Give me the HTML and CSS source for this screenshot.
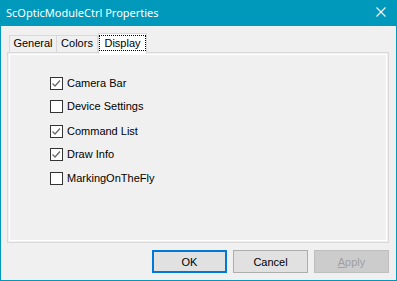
FILE: index.html
```html
<!DOCTYPE html>
<html>
<head>
<meta charset="utf-8">
<link rel="stylesheet" href="styles.css">
</head>
<body>
<div class="window">
  <div class="titlebar">
    <span class="title">ScOpticModuleCtrl Properties</span>
    <svg class="close" width="10" height="10" viewBox="0 0 10 10"><path d="M0.5 0.5 L9.5 9.5 M9.5 0.5 L0.5 9.5" stroke="#fff" stroke-width="1.1" fill="none"/></svg>
  </div>
  <div class="content">
    <div class="tabs">
      <div class="tab tab-general">General</div>
      <div class="tab tab-colors">Colors</div>
      <div class="tab tab-display selected"><span class="focus">Display</span></div>
    </div>
    <div class="panel">
      <div class="list">
        <div class="row"><span class="box"><svg width="11" height="11" viewBox="0 0 11 11"><path d="M1.5 5.5 L4 8 L9 2.5" stroke="#6a6a6a" stroke-width="1.3" fill="none"/></svg></span><span class="label">Camera Bar</span></div>
        <div class="row r2"><span class="box"></span><span class="label">Device Settings</span></div>
        <div class="row r3"><span class="box"><svg width="11" height="11" viewBox="0 0 11 11"><path d="M1.5 5.5 L4 8 L9 2.5" stroke="#6a6a6a" stroke-width="1.3" fill="none"/></svg></span><span class="label">Command List</span></div>
        <div class="row r4"><span class="box"><svg width="11" height="11" viewBox="0 0 11 11"><path d="M1.5 5.5 L4 8 L9 2.5" stroke="#6a6a6a" stroke-width="1.3" fill="none"/></svg></span><span class="label">Draw Info</span></div>
        <div class="row r5"><span class="box"></span><span class="label">MarkingOnTheFly</span></div>
      </div>
    </div>
    <div class="buttons">
      <div class="btn default">OK</div>
      <div class="btn">Cancel</div>
      <div class="btn disabled"><u>A</u>pply</div>
    </div>
  </div>
</div>
</body>
</html>
```

FILE: styles.css
```css
html, body {
  margin: 0;
  padding: 0;
  background: #f0f0f0;
}
.window {
  width: 397px;
  height: 281px;
  box-sizing: border-box;
  border: 1px solid #0099bc;
  border-top: none;
  background: #f0f0f0;
  font-family: "Liberation Sans", Arial, sans-serif;
  font-size: 11px;
  color: #000;
}
.titlebar {
  height: 26px;
  margin: 0 -1px;
  background: #0099bc;
  display: flex;
  align-items: center;
  justify-content: space-between;
  padding: 0 11px 0 6px;
}
.title {
  color: #fff;
  font-family: "Noto Sans", "Open Sans", sans-serif;
  font-size: 11px;
  line-height: 16px;
  padding-bottom: 1px;
}
.close {
  display: block;
  margin-bottom: 3px;
}
.content {
  padding: 7px 7px 0 6px;
}
.tabs {
  display: flex;
  height: 19px;
  padding-left: 2px;
  position: relative;
  z-index: 1;
}
.tab {
  box-sizing: border-box;
  height: 17px;
  margin-top: 2px;
  border: 1px solid #d9d9d9;
  border-bottom: none;
  background: #f0f0f0;
  line-height: 15px;
  text-align: center;
}
.tab-general { width: 48px; }
.tab-colors { width: 41px; border-left: none; }
.tab-display { width: 49px; }
.tab.selected {
  height: 21px;
  margin-top: 0;
  background: #fff;
  border-color: #d9d9d9;
  padding-top: 1px;
}
.focus {
  display: inline-block;
  border: 1px dotted #000;
  padding: 0 4px;
  line-height: 14px;
}
.panel {
  box-sizing: border-box;
  height: 191px;
  border: 1px solid #d9d9d9;
  box-shadow: inset 0 0 0 1px #f0f0f0, inset 0 0 0 2px #fff;
  padding: 24px 0 0 42px;
}
.list {
  display: flex;
  flex-direction: column;
}
.row {
  display: flex;
  align-items: center;
  height: 13px;
}
.r2 { margin-top: 10px; }
.r3 { margin-top: 12px; }
.r4 { margin-top: 10px; }
.r5 { margin-top: 11px; }
.box {
  box-sizing: border-box;
  width: 13px;
  height: 13px;
  border: 1px solid #333;
  background: #fff;
  display: flex;
  align-items: center;
  justify-content: center;
}
.box svg { display: block; }
.label {
  margin-left: 4px;
  line-height: 13px;
}
.buttons {
  display: flex;
  justify-content: flex-end;
  gap: 6px;
  margin-top: 7px;
}
.btn {
  box-sizing: border-box;
  width: 75px;
  height: 23px;
  border: 1px solid #adadad;
  background: #e1e1e1;
  display: flex;
  align-items: center;
  justify-content: center;
}
.btn.default {
  border: 2px solid #0078d7;
}
.btn.disabled {
  background: #cccccc;
  border-color: #bfbfbf;
  color: #a0a0a0;
}
.btn u { text-decoration: underline; }
```
